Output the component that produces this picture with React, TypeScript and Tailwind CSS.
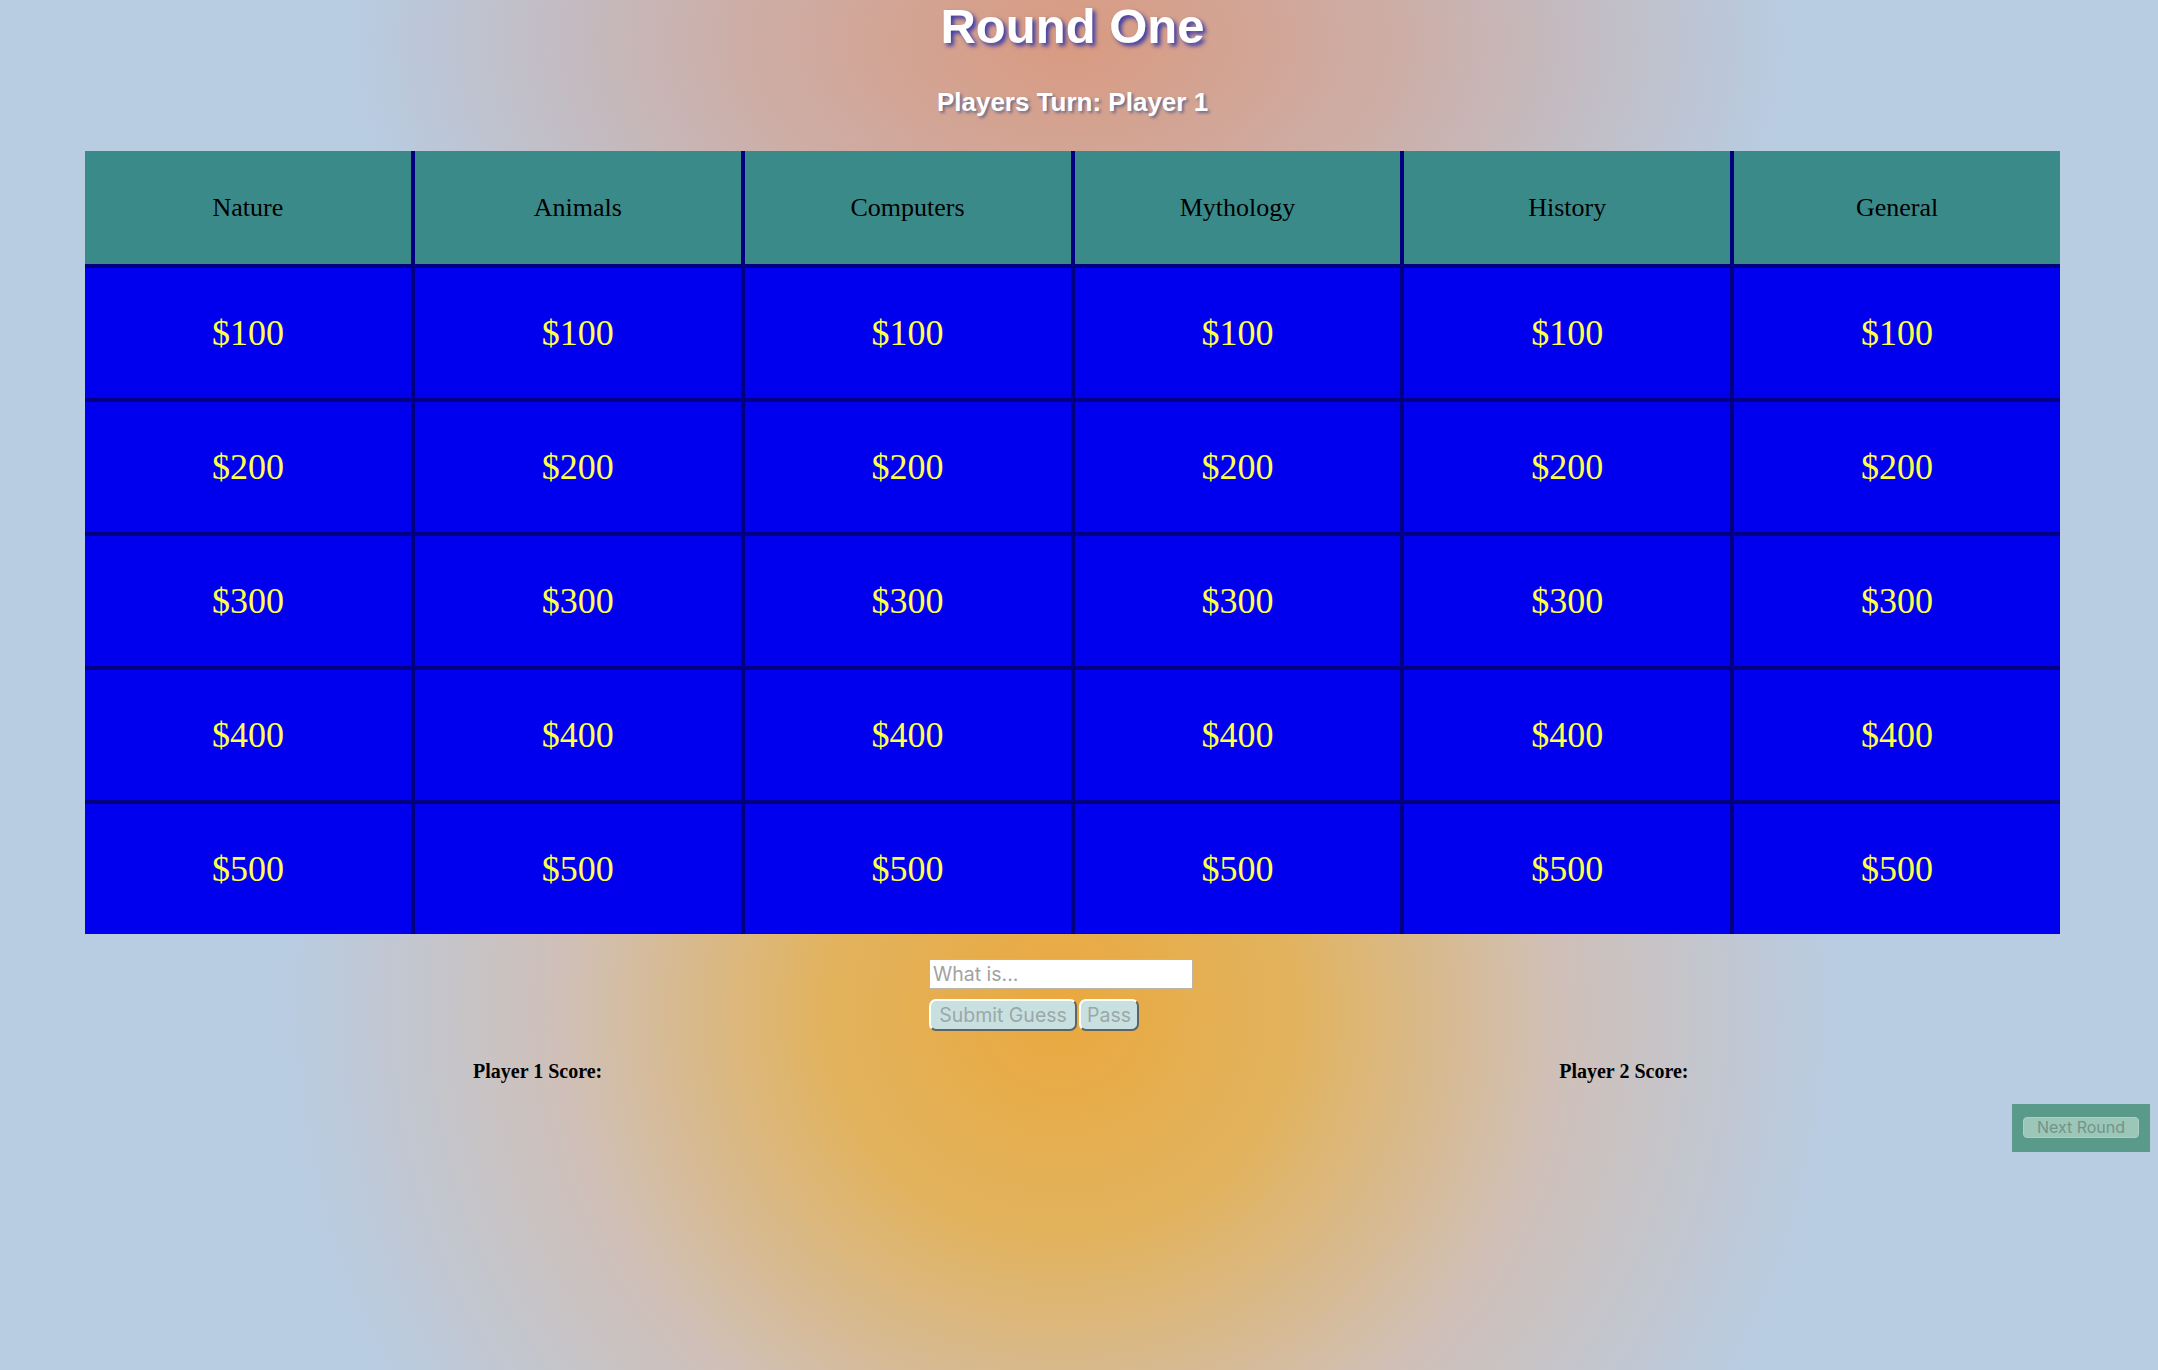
const categories = ["Nature", "Animals", "Computers", "Mythology", "History", "General"];
const values = [100, 200, 300, 400, 500];

export default function App() {
  return (
    <div className="h-[1370px] w-full overflow-hidden bg-[#b8cce2] bg-[image:radial-gradient(ellipse_780px_760px_at_1060px_1010px,#eaa83e_0%,#e2b35e_30%,rgba(214,188,172,0.78)_64%,rgba(184,204,226,0)_100%),radial-gradient(ellipse_720px_440px_at_1070px_40px,#d99a80_0%,rgba(214,160,140,0.7)_45%,rgba(184,204,226,0)_100%)]">
      {/* heading */}
      <h1 className="ml-[85px] w-[1975px] pt-[2px] text-center font-['Liberation_Sans',Arial,sans-serif] text-[49px] leading-[48px] font-bold text-white [text-shadow:3px_3px_4px_#3b3ba6]">
        Round One
      </h1>
      <h2 className="ml-[85px] mt-[39px] w-[1975px] text-center font-['Liberation_Sans',Arial,sans-serif] text-[26px] leading-[26px] font-bold text-white [text-shadow:2px_2px_3px_#6b6b8a]">
        Players Turn: Player 1
      </h2>

      {/* board */}
      <div className="ml-[85px] mt-[36px] grid w-[1975px] grid-cols-6 gap-[4px] bg-[#000080] font-['Liberation_Serif','Times_New_Roman',serif]">
        {categories.map((c) => (
          <div key={c} className="flex h-[113px] items-center justify-center bg-[#3b8a8a] text-[26px] text-black">
            {c}
          </div>
        ))}
        {values.map((v) =>
          categories.map((c) => (
            <div key={c + v} className="flex h-[130px] items-center justify-center bg-[#0000ee] text-[36px] text-[#ffff4d]">
              ${v}
            </div>
          ))
        )}
      </div>

      {/* guess form */}
      <div className="ml-[929px] mt-[25px] flex flex-col items-start gap-[10px] font-['Inter',sans-serif]">
        <input
          placeholder="What is..."
          className="h-[30px] w-[264px] border border-[#bdb6a8] bg-white px-[3px] text-[19.5px] text-black outline-none placeholder:text-[#a2a2a2]"
        />
        <div className="flex gap-[2px]">
          <button className="h-[32px] w-[148px] rounded-[7px] border-2 border-t-white border-l-white border-b-[#5e6466] border-r-[#5e6466] bg-[#c9e0e0] text-[19.5px] text-[#9aa8a8]">
            Submit Guess
          </button>
          <button className="h-[32px] w-[60px] rounded-[7px] border-2 border-t-white border-l-white border-b-[#5e6466] border-r-[#5e6466] bg-[#c9e0e0] text-[19.5px] text-[#9aa8a8]">
            Pass
          </button>
        </div>
      </div>

      {/* scores */}
      <div className="mt-[30px] flex font-['Liberation_Serif','Times_New_Roman',serif] text-[20px] leading-[20px] font-bold text-black">
        <div className="ml-[473px]">Player 1 Score:</div>
        <div className="ml-[957px]">Player 2 Score:</div>
      </div>

      <div className="ml-[2012px] mt-[23px] flex h-[48px] w-[138px] items-start justify-center bg-[#5a9a8a] pt-[13px]">
        <button className="h-[21px] w-[116px] rounded-[4px] border border-[#a8d0c4] bg-[#9cc6b8] font-['Inter',sans-serif] text-[16px] leading-[19px] text-[#729488]">
          Next Round
        </button>
      </div>
    </div>
  );
}
